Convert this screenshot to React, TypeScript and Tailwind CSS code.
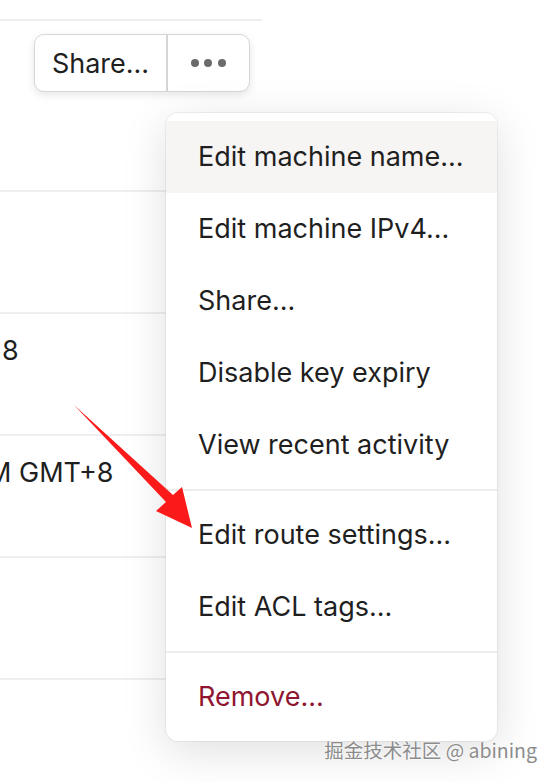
import React from 'react';

const menuGroups: { label: string; danger?: boolean; active?: boolean }[][] = [
  [
    { label: 'Edit machine name...', active: true },
    { label: 'Edit machine IPv4...' },
    { label: 'Share...' },
    { label: 'Disable key expiry' },
    { label: 'View recent activity' },
  ],
  [{ label: 'Edit route settings...' }, { label: 'Edit ACL tags...' }],
  [{ label: 'Remove...', danger: true }],
];

export default function App() {
  return (
    <div className="relative w-[556px] h-[782px] overflow-hidden bg-white text-[#1f1f1f] font-['Inter','Liberation_Sans',sans-serif]">
      {/* page behind the menu */}
      <div className="h-[21px] w-[262px] border-b-2 border-[#eeeeee]" />
      <div className="ml-[34px] mt-[13px] inline-flex h-[58px] rounded-[10px] border-[1.5px] border-[#d6d6d6] bg-white shadow-[0_3px_8px_rgba(0,0,0,0.1)]">
        <button className="w-[131px] flex items-center justify-center text-[27px] leading-none">Share...</button>
        <div className="w-[1.5px] bg-[#d6d6d6]" />
        <button className="flex-1 w-[81px] flex items-center justify-center gap-[5.5px]">
          <span className="w-[8px] h-[8px] rounded-full bg-[#6b6b6b]" />
          <span className="w-[8px] h-[8px] rounded-full bg-[#6b6b6b]" />
          <span className="w-[8px] h-[8px] rounded-full bg-[#6b6b6b]" />
        </button>
      </div>
      <div className="mt-[98px] w-[262px] border-t-2 border-[#eeeeee]">
        <div className="h-[122px] border-b-2 border-[#eeeeee]" />
        <div className="h-[122px] border-b-2 border-[#eeeeee] overflow-hidden pt-[20px] text-[27px] leading-[34px] whitespace-nowrap">
          <div className="pl-[2px]">8</div>
        </div>
        <div className="h-[122px] border-b-2 border-[#eeeeee] overflow-hidden pt-[20px] text-[27px] leading-[34px] whitespace-nowrap">
          <div className="-ml-[13px]">M GMT+8</div>
        </div>
        <div className="h-[122px] border-b-2 border-[#eeeeee]" />
      </div>

      {/* dropdown menu */}
      <div className="absolute left-[166px] top-[113px] w-[331px] rounded-[12px] bg-white shadow-[0_10px_45px_rgba(0,0,0,0.13)] ring-1 ring-black/5">
        {menuGroups.map((group, gi) => (
          <div key={gi} className={`py-[8px] ${gi > 0 ? 'border-t-2 border-[#ededed]' : ''}`}>
            {group.map((item) => (
              <div
                key={item.label}
                className={`h-[72px] flex items-center pl-[32px] text-[27px] whitespace-nowrap ${
                  item.active ? 'bg-[#f6f5f3]' : ''
                } ${item.danger ? 'text-[#8f1530]' : 'text-[#1f1f1f]'}`}
              >
                {item.label}
              </div>
            ))}
          </div>
        ))}
      </div>

      {/* annotation arrow */}
      <svg className="absolute left-0 top-0" width="556" height="782" viewBox="0 0 556 782">
        <polygon points="74,405 173,495 182,487 192,528 156,511 166,502" fill="#fb1a1a" />
      </svg>

      {/* watermark */}
      <div className="absolute right-[19px] top-[736px] text-[19.5px] leading-[28px] text-[#8c8c8c] whitespace-nowrap font-['Noto_Sans_CJK_SC','Liberation_Sans',sans-serif] [text-shadow:0_0_2px_#fff,0_0_2px_#fff]">
        掘金技术社区 @ abining
      </div>
    </div>
  );
}
